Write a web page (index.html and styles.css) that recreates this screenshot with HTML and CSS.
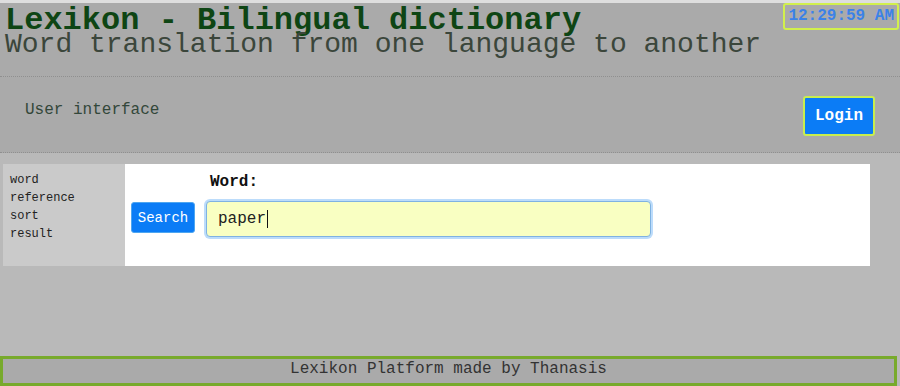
FILE: index.html
```html
<!DOCTYPE html>
<html lang="en">
<head>
<meta charset="utf-8">
<title>Lexikon - Bilingual dictionary</title>
<link rel="stylesheet" href="styles.css">
</head>
<body>
<header class="site-header">
  <div class="titles">
    <h1 class="title">Lexikon - Bilingual dictionary</h1>
    <p class="subtitle">Word translation from one language to another</p>
  </div>
  <div class="clock">12:29:59 AM</div>
</header>
<nav class="navbar">
  <span class="nav-label">User interface</span>
  <button class="login-btn" type="button">Login</button>
</nav>
<main class="main">
  <aside class="sidebar">
    <div>word</div>
    <div>reference</div>
    <div>sort</div>
    <div>result</div>
  </aside>
  <section class="content">
    <div class="search-grid">
      <span></span>
      <label class="word-label">Word:</label>
      <button class="search-btn" type="button">Search</button>
      <div class="word-input"><span>paper</span><span class="caret"></span></div>
    </div>
  </section>
</main>
<footer class="footer">Lexikon Platform made by Thanasis</footer>
</body>
</html>
```
FILE: styles.css
```css
* { box-sizing: border-box; }
html, body { margin: 0; padding: 0; }
body {
  background: #b9b9b9;
  font-family: "Liberation Mono", "Courier New", monospace;
  min-height: 100vh;
  display: flex;
  flex-direction: column;
}
.site-header {
  height: 76px;
  background: #aaaaaa;
  border-top: 3px solid #dedede;
  display: flex;
  justify-content: space-between;
  align-items: flex-start;
}
.titles { padding: 4px 0 0 5px; }
.title {
  margin: 0;
  font-size: 32px;
  line-height: 28px;
  font-weight: bold;
  color: #0e4514;
}
.subtitle {
  margin: 0;
  font-size: 28px;
  line-height: 20px;
  color: #3b463b;
}
.clock {
  margin-right: 1px;
  border: 2px solid #d2f04c;
  border-radius: 3px;
  padding: 2px 3px;
  font-size: 16px;
  line-height: 19px;
  font-weight: bold;
  color: #3b82e8;
}
.navbar {
  height: 77px;
  background: #aaaaaa;
  border-top: 1px dotted #8f8f8f;
  border-bottom: 1px dotted #8f8f8f;
  display: flex;
  align-items: center;
  justify-content: space-between;
  padding: 0 25px;
}
.nav-label {
  font-size: 16px;
  line-height: 18px;
  color: #33473a;
  margin-bottom: 10px;
}
.login-btn {
  width: 72px;
  height: 40px;
  margin-top: 2px;
  border: 2px solid #c8ee4e;
  border-radius: 3px;
  background: #0b7cf6;
  color: #fff;
  font-family: "Liberation Mono", "Courier New", monospace;
  font-size: 16px;
  font-weight: bold;
  padding: 0;
}
.main {
  margin: 11px 30px 0 3px;
  height: 102px;
  display: flex;
}
.sidebar {
  width: 122px;
  background: #cacaca;
  padding: 7px 0 0 7px;
  font-size: 12px;
  line-height: 18px;
  color: #222;
}
.content {
  flex: 1;
  background: #fff;
  padding: 9px 0 0 6px;
}
.search-grid {
  display: grid;
  grid-template-columns: auto auto;
  justify-content: start;
  column-gap: 11px;
  row-gap: 10px;
  align-items: center;
}
.word-label {
  padding-left: 4px;
  font-size: 16px;
  line-height: 18px;
  font-weight: bold;
  color: #111;
}
.search-btn {
  width: 64px;
  height: 31px;
  margin-top: -3px;
  border: 1px solid #4ea6f0;
  border-radius: 3px;
  background: #0b7cf6;
  color: #fff;
  font-family: "Liberation Mono", "Courier New", monospace;
  font-size: 14px;
  padding: 0;
}
.word-input {
  width: 445px;
  height: 36px;
  border: 1px solid #7fb2e2;
  border-radius: 4px;
  box-shadow: 0 0 0 2px #bcdcfb;
  background: #f9ffc2;
  padding: 0 11px;
  display: flex;
  align-items: center;
  font-size: 16px;
  color: #222;
}
.caret {
  display: inline-block;
  width: 1px;
  height: 18px;
  background: #111;
  margin-left: 1px;
}
.footer {
  margin-top: auto;
  width: calc(100% - 3px);
  height: 30px;
  border: 3px solid #78aa2c;
  background: #aaaaaa;
  text-align: center;
  font-size: 16px;
  line-height: 18px;
  color: #333;
  padding-top: 1px;
}
```
